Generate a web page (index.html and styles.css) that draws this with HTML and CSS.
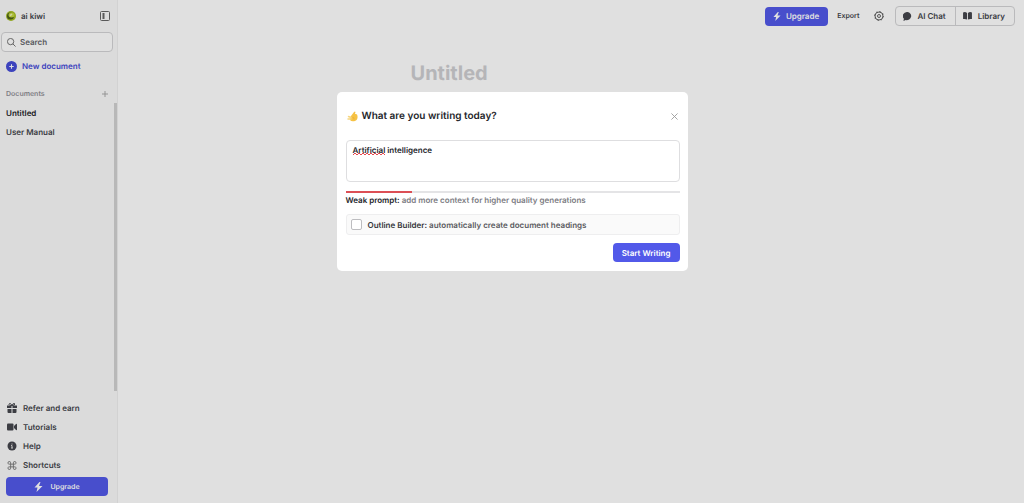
FILE: index.html
```
<!DOCTYPE html>
<html lang="en">
<head>
    <meta charset="UTF-8">
    <meta name="viewport" content="width=device-width, initial-scale=1.0">
    <title>Untitled</title>
    <link rel="stylesheet" href="styles.css">
</head>
<body>
    <div class="app">
        <aside class="sidebar">
            <div class="workspace">
                <svg class="avatar" viewBox="0 0 20 20"><circle cx="10" cy="10" r="10" fill="#a5bd24"/><circle cx="9" cy="10" r="7" fill="#4d6118"/><ellipse cx="11" cy="8" rx="6" ry="5" fill="#c3d83f"/><path d="M7 8l4-3 2 2-4 4z" fill="#edf3b5"/></svg>
                <span class="workspace-name">ai kiwi</span>
                <button class="icon-btn" aria-label="Toggle sidebar">
                    <svg width="10" height="10" viewBox="0 0 20 20" fill="none" stroke="#666" stroke-width="2"><rect x="1" y="1" width="18" height="18" rx="2"/><path d="M7 4v12" stroke-width="4"/></svg>
                </button>
            </div>
            <label class="search">
                <svg width="9" height="9" viewBox="0 0 20 20" fill="none" stroke="#666" stroke-width="2"><circle cx="8" cy="8" r="7"/><path d="M13 13l6 6"/></svg>
                <input type="search" placeholder="Search" aria-label="Search">
            </label>
            <button class="new-doc">
                <svg width="11" height="11" viewBox="0 0 20 20"><circle cx="10" cy="10" r="10" fill="#464dd8"/><path d="M10 6v8M6 10h8" stroke="#fff" stroke-width="2"/></svg>
                New document
            </button>
            <div class="docs-header">
                <span>Documents</span>
                <button class="icon-btn" aria-label="Add document">
                    <svg width="6" height="6" viewBox="0 0 12 12" stroke="#aaa" stroke-width="2"><path d="M6 0v12M0 6h12"/></svg>
                </button>
            </div>
            <nav class="docs">
                <a class="active" href="#">Untitled</a>
                <a href="#">User Manual</a>
            </nav>
            <nav class="links">
                <a href="#">
                    <svg width="10" height="10" viewBox="0 0 20 20" fill="#45464d"><path d="M0 5h9v5H0zM11 5h9v5h-9zM1 12h8v8H3q-2 0-2-2zM11 12h8v6q0 2-2 2h-6z"/><path d="M10 5C8 0 4 0 4 3q0 2 6 2zq2-5 5-4 2 4-5 4z" fill="none" stroke="#45464d" stroke-width="2"/></svg>
                    Refer and earn
                </a>
                <a href="#">
                    <svg width="10" height="10" viewBox="0 0 20 20" fill="#45464d"><rect y="3" width="13" height="14" rx="2"/><path d="M14 8l4-4q2-1 2 1v10q0 2-2 1l-4-4z"/></svg>
                    Tutorials
                </a>
                <a href="#">
                    <svg width="10" height="10" viewBox="0 0 20 20"><circle cx="10" cy="10" r="9" fill="#45464d"/><path d="M10 5v2M8 9h2v5M8 14h4" fill="none" stroke="#ddd" stroke-width="2"/></svg>
                    Help
                </a>
                <a href="#">
                    <svg width="10" height="9" viewBox="0 0 20 20" fill="none" stroke="#777" stroke-width="2"><path d="M7 7H5a3 3 0 1 1 2-3v12a3 3 0 1 1-2-3h10a3 3 0 1 1-2 3V4a3 3 0 1 1 2 3z"/></svg>
                    Shortcuts
                </a>
            </nav>
            <button class="btn-primary">
                <svg width="9" height="10" viewBox="0 0 18 20" fill="#fff"><path d="M11 0L1 11h6L5 20l12-12h-7l3-8z"/></svg>
                Upgrade
            </button>
        </aside>

        <main class="main">
            <header class="toolbar">
                <button class="btn-primary toolbar-upgrade">
                    <svg width="8" height="9" viewBox="0 0 18 20" fill="#fff"><path d="M11 0L1 11h6L5 20l12-12h-7l3-8z"/></svg>
                    Upgrade
                </button>
                <button class="export">Export</button>
                <button class="icon-btn" aria-label="Settings">
                    <svg width="10" height="10" viewBox="0 0 20 20" fill="none" stroke="#666"><circle cx="10" cy="10" r="8" stroke-width="2"/><circle cx="10" cy="10" r="9" stroke-width="2" stroke-dasharray="3 4"/><circle cx="10" cy="10" r="3" stroke-width="2"/></svg>
                </button>
                <div class="btn-group">
                    <button>
                        <svg width="9" height="9" viewBox="0 0 20 20" fill="#45464d"><path d="M10 0a10 9 0 1 1-4 18l-5 2 1-5A10 9 0 0 1 10 0z"/></svg>
                        AI Chat
                    </button>
                    <button>
                        <svg width="9" height="8" viewBox="0 0 20 18" fill="#45464d"><path d="M0 1q5-2 9 1v15q-4-2-9-1zM20 1q-5-2-9 1v15q4-2 9-1z"/></svg>
                        Library
                    </button>
                </div>
            </header>
            <article class="editor">
                <h1>Untitled</h1>
            </article>
        </main>
    </div>

    <div class="overlay">
        <form class="modal" role="dialog" aria-labelledby="modalTitle">
            <div class="modal-header">
                <svg width="11" height="11" viewBox="0 0 22 22"><path d="M8 10l6-8q2-2 3 0l-1 4q5-1 5 4 1 8-5 10-7 2-10-2-2-4 2-8z" fill="#f6c244"/><path d="M8 13L3 11M8 16l-6 0" stroke="#f6d680" stroke-width="3" stroke-linecap="round"/><path d="M11 13q4-1 3 4" fill="none" stroke="#e0a02c"/></svg>
                <h2 id="modalTitle">What are you writing today?</h2>
                <button type="button" class="icon-btn" aria-label="Close">
                    <svg width="7" height="7" viewBox="0 0 16 16" stroke="#999" stroke-width="2"><path d="M1 1l14 14M15 1L1 15"/></svg>
                </button>
            </div>
            <div class="prompt">
                <textarea aria-label="Prompt" spellcheck="false">Artificial intelligence</textarea>
                <svg class="misspelled" width="32" height="3" viewBox="0 0 32 3" fill="none" stroke="#e5484d"><path d="M0 2l2-2 2 2 2-2 2 2 2-2 2 2 2-2 2 2 2-2 2 2 2-2 2 2 2-2 2 2 2-2 2 2"/></svg>
            </div>
            <div class="strength"><div class="strength-fill" style="width: 20%"></div></div>
            <p class="hint"><strong>Weak prompt:</strong> add more context for higher quality generations</p>
            <label class="outline">
                <input type="checkbox">
                <span><strong>Outline Builder:</strong> automatically create document headings</span>
            </label>
            <button type="submit" class="btn-primary start">Start Writing</button>
        </form>
    </div>
</body>
</html>
```
FILE: styles.css
```
* {
    box-sizing: border-box;
}
body {
    margin: 0;
    font-family: Inter, sans-serif;
    font-size: 8px;
    line-height: 12px;
    font-weight: 600;
    color: #45464d;
    background-color: #fff;
    text-rendering: geometricPrecision;
}
button, input, textarea {
    font: inherit;
    color: inherit;
    text-rendering: inherit;
}
button {
    display: flex;
    align-items: center;
    padding: 0;
    border: none;
    background: none;
    cursor: pointer;
}
svg {
    flex: none;
}
a {
    color: inherit;
    text-decoration: none;
}
.app {
    display: flex;
    min-height: 100vh;
}

/* Sidebar */
.sidebar {
    display: flex;
    flex-direction: column;
    width: 118px;
    padding: 9px 0 7px;
    background-color: #fafafa;
    border-right: 1px solid #f0f0f0;
}
.workspace {
    display: flex;
    align-items: center;
    gap: 5px;
    height: 14px;
    padding: 0 7px 0 6px;
}
.avatar {
    width: 10px;
    height: 10px;
}
.workspace-name {
    flex: 1;
}
.search {
    display: flex;
    align-items: center;
    gap: 4px;
    height: 20px;
    margin: 9px 4px 0 1px;
    padding: 0 5px;
    background-color: #fff;
    border: 1px solid #d4d4d6;
    border-radius: 4px;
}
.search input {
    width: 100%;
    min-width: 0;
    padding: 0;
    border: none;
    outline: none;
    background: none;
}
.search input::placeholder {
    color: #66676d;
}
.new-doc {
    gap: 5px;
    height: 12px;
    margin: 8px 6px 0;
    color: #464dd8;
}
.docs-header {
    display: flex;
    align-items: center;
    justify-content: space-between;
    margin: 16px 9px 3px 6px;
    font-size: 7px;
    color: #919197;
}
.docs {
    display: flex;
    flex: 1;
    flex-direction: column;
    gap: 7px;
    padding: 4px 6px;
    border-right: 3px solid #d2d2d2;
}
.docs .active {
    color: #222328;
}
.links {
    display: flex;
    flex-direction: column;
    gap: 7px;
    padding: 11px 7px 6px;
}
.links a {
    display: flex;
    align-items: center;
    gap: 6px;
}
.btn-primary {
    justify-content: center;
    height: 19px;
    color: #fff;
    background-color: #5259e9;
    border-radius: 4px;
}
.sidebar .btn-primary {
    gap: 7px;
    margin: 0 9px 0 6px;
    font-size: 7px;
}

/* Editor */
.main {
    flex: 1;
}
.toolbar {
    display: flex;
    align-items: center;
    justify-content: flex-end;
    padding: 6px 9px 0 0;
}
.toolbar-upgrade {
    gap: 5px;
    padding: 0 9px 0 8px;
}
.export {
    margin: 0 15px 0 9px;
    font-size: 7px;
}
.btn-group {
    display: flex;
    margin-left: 11px;
    border: 1px solid #d4d4d6;
    border-radius: 4px;
}
.btn-group button {
    gap: 5px;
    height: 18px;
    padding: 0 9px 0 7px;
}
.btn-group button + button {
    gap: 6px;
    border-left: 1px solid #d4d4d6;
}
.editor {
    max-width: 321px;
    margin: 0 auto;
    padding-top: 35px;
}
.editor h1 {
    margin: 0;
    font-size: 20px;
    line-height: 24px;
    font-weight: 700;
    color: #cfcfd2;
}

/* Prompt dialog */
.overlay {
    position: fixed;
    inset: 0;
    padding: 92px 16px 0;
    background-color: rgba(0, 0, 0, 0.12);
}
.modal {
    display: flex;
    flex-direction: column;
    max-width: 351px;
    margin: 0 auto;
    padding: 16px 8px 9px 9px;
    background-color: #fff;
    border-radius: 5px;
}
.modal-header {
    display: flex;
    align-items: center;
    gap: 4px;
    padding: 0 2px 0 1px;
}
.modal-header h2 {
    flex: 1;
    margin: 0;
    font-size: 10px;
    line-height: 16px;
    font-weight: 600;
    color: #25262b;
}
.prompt {
    position: relative;
    margin-top: 16px;
}
.prompt textarea {
    display: block;
    width: 100%;
    height: 42px;
    padding: 3px 6px;
    color: #25262b;
    background-color: #fff;
    border: 1px solid #dedee0;
    border-radius: 4px;
    outline: none;
    resize: none;
}
.misspelled {
    position: absolute;
    top: 13px;
    left: 7px;
}
.strength {
    height: 2px;
    margin-top: 9px;
    background-color: #e4e4e6;
}
.strength-fill {
    height: 100%;
    background-color: #dc4f55;
}
.hint {
    margin: 1px 0 8px;
    color: #7d7d84;
}
.hint strong {
    font-weight: 600;
    color: #25262b;
}
.outline {
    display: flex;
    align-items: center;
    gap: 6px;
    height: 21px;
    padding: 0 4px;
    color: #5a5b61;
    background-color: #fafafa;
    border: 1px solid #eeeeef;
    border-radius: 3px;
}
.outline input {
    appearance: none;
    width: 11px;
    height: 11px;
    margin: 0;
    background-color: #fff;
    border: 1px solid #bdbdc0;
    border-radius: 2px;
}
.outline strong {
    font-weight: 600;
    color: #35363b;
}
.start {
    align-self: flex-end;
    margin-top: 8px;
    padding: 0 9px;
}
```
